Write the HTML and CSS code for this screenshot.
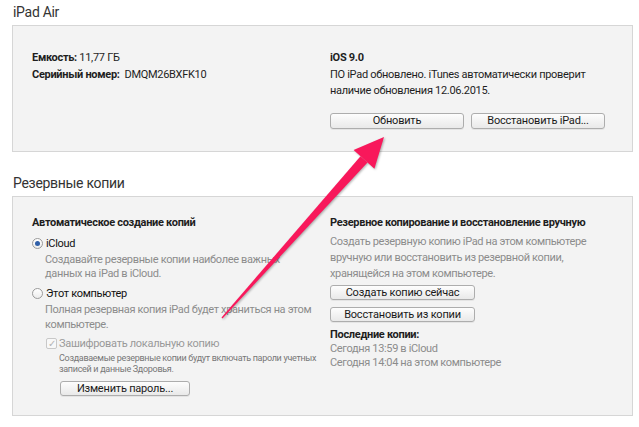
FILE: index.html
```html
<!DOCTYPE html>
<html lang="ru">
<head>
    <meta charset="utf-8" />
    <title>iPad Air</title>
    <link rel="stylesheet" href="styles.css">
</head>
<body>
    <div class="page">
        <h2 class="section-title">iPad Air</h2>
        <div class="panel panel-device">
            <div class="col">
                <div class="info-row"><b>Емкость:</b> 11,77 ГБ</div>
                <div class="info-row"><b>Серийный номер:</b>&nbsp; DMQM26BXFK10</div>
            </div>
            <div class="col">
                <div class="info-row"><b>iOS 9.0</b></div>
                <div class="info-row">ПО iPad обновлено. iTunes автоматически проверит</div>
                <div class="info-row">наличие обновления 12.06.2015.</div>
                <div class="btn-row">
                    <button class="btn btn-update">Обновить</button>
                    <button class="btn btn-update">Восстановить iPad...</button>
                </div>
            </div>
        </div>

        <h2 class="section-title section-title-2">Резервные копии</h2>
        <div class="panel panel-backup">
            <div class="col">
                <div class="head">Автоматическое создание копий</div>
                <label class="option"><span class="radio checked"></span>iCloud</label>
                <p class="desc desc-icloud">Создавайте резервные копии наиболее важных<br>данных на iPad в iCloud.</p>
                <label class="option"><span class="radio"></span>Этот компьютер</label>
                <p class="desc desc-pc">Полная резервная копия iPad будет храниться на этом<br>компьютере.</p>
                <label class="check-row"><span class="checkbox">&#10003;</span>Зашифровать локальную копию</label>
                <p class="small">Создаваемые резервные копии будут включать пароли учетных<br>записей и данные Здоровья.</p>
                <button class="btn btn-password">Изменить пароль...</button>
            </div>
            <div class="col">
                <div class="head">Резервное копирование и восстановление вручную</div>
                <p class="desc desc-manual">Создать резервную копию iPad на этом компьютере<br>вручную или восстановить из резервной копии,<br>хранящейся на этом компьютере.</p>
                <button class="btn btn-backup">Создать копию сейчас</button>
                <button class="btn btn-backup btn-restore">Восстановить из копии</button>
                <div class="head head-last">Последние копии:</div>
                <p class="desc desc-last">Сегодня 13:59 в iCloud<br>Сегодня 14:04 на этом компьютере</p>
            </div>
        </div>
    </div>

    <!-- pointer arrow drawn over the screenshot -->
    <svg class="arrow" width="639" height="427" viewBox="0 0 639 427">
        <polygon points="221.5,317.5 222.5,318.5 367.5,162.5 360.5,156.2" fill="#f8185b" />
        <polygon points="384,137 353.6,150.1 374.4,168.7" fill="#f8185b" />
    </svg>
</body>
</html>
```

FILE: styles.css
```css
* { box-sizing: border-box; margin: 0; padding: 0; }
body {
    font-family: Roboto, "Open Sans", sans-serif;
    font-size: 11px;
    letter-spacing: -0.3px;
    color: #1e1e1e;
    background: #fff;
    width: 639px;
    height: 427px;
    overflow: hidden;
    position: relative;
}
.page {
    padding: 2px 6px 0 12px;
}
.section-title {
    font-size: 14px;
    font-weight: normal;
    line-height: 20px;
    color: #333;
    padding-left: 1px;
    margin-bottom: 3px;
}
.section-title-2 {
    margin-top: 21px;
}
.panel {
    background: #f3f3f3;
    border: 1px solid #d6d6d6;
    display: grid;
    grid-template-columns: 298px 1fr;
    padding-left: 19px;
}
.panel-device {
    padding-top: 24px;
    padding-bottom: 22px;
}
.panel-backup {
    padding-top: 18px;
    padding-bottom: 19px;
}
.col {
    display: flex;
    flex-direction: column;
    align-items: flex-start;
}
.info-row {
    line-height: 16.5px;
    white-space: nowrap;
}
.info-row b {
    font-weight: bold;
}
.btn-row {
    display: flex;
    gap: 7px;
    margin-top: 13px;
}
.btn {
    font-family: inherit;
    font-size: 11px;
    letter-spacing: -0.2px;
    color: #1a1a1a;
    background: linear-gradient(#fdfdfd, #e9e9e9);
    border: 1px solid #adadad;
    border-radius: 3px;
    box-shadow: 0 1px 0 rgba(0,0,0,0.06);
    text-align: center;
    line-height: 13px;
}
.btn-update {
    width: 134px;
    height: 16px;
}
.head {
    font-weight: bold;
    line-height: 16px;
    white-space: nowrap;
}
.option {
    display: flex;
    align-items: center;
    line-height: 16px;
    margin-top: 5px;
    color: #111;
}
.radio {
    width: 11px;
    height: 11px;
    border: 1px solid #9a9a9a;
    border-radius: 50%;
    background: linear-gradient(#fff, #ececec);
    margin-right: 3px;
    position: relative;
}
.radio.checked::after {
    content: "";
    position: absolute;
    left: 2px;
    top: 2px;
    width: 5px;
    height: 5px;
    border-radius: 50%;
    background: #2f5fa8;
}
.desc {
    color: #8c8c8c;
    letter-spacing: -0.35px;
    white-space: nowrap;
    padding-left: 13px;
}
.desc-icloud {
    line-height: 14px;
    margin-top: 1px;
}
.desc-pc {
    line-height: 15px;
}
.check-row {
    display: flex;
    align-items: center;
    color: #999;
    line-height: 16px;
    margin-top: 4px;
    padding-left: 14px;
}
.checkbox {
    width: 11px;
    height: 11px;
    border: 1px solid #c8c8c8;
    border-radius: 2px;
    background: #f8f8f8;
    color: #b5b5b5;
    font-size: 10px;
    line-height: 9px;
    text-align: center;
    margin-right: 2px;
}
.small {
    font-size: 9px;
    color: #777;
    line-height: 11.5px;
    margin-top: 1px;
    padding-left: 27px;
    white-space: nowrap;
}
.btn-password {
    width: 130px;
    height: 15px;
    margin-top: 5px;
    margin-left: 28px;
}
.desc-manual {
    padding-left: 0;
    line-height: 16px;
    margin-top: 3px;
}
.btn-backup {
    width: 145px;
    height: 15px;
    margin-top: 3px;
}
.btn-restore {
    margin-top: 7px;
}
.head-last {
    line-height: 15px;
    margin-top: 5px;
}
.desc-last {
    padding-left: 0;
    line-height: 14px;
}
.arrow {
    position: absolute;
    top: 0;
    left: 0;
    pointer-events: none;
    filter: drop-shadow(1px 1px 1px rgba(0,0,0,0.3));
}
```
